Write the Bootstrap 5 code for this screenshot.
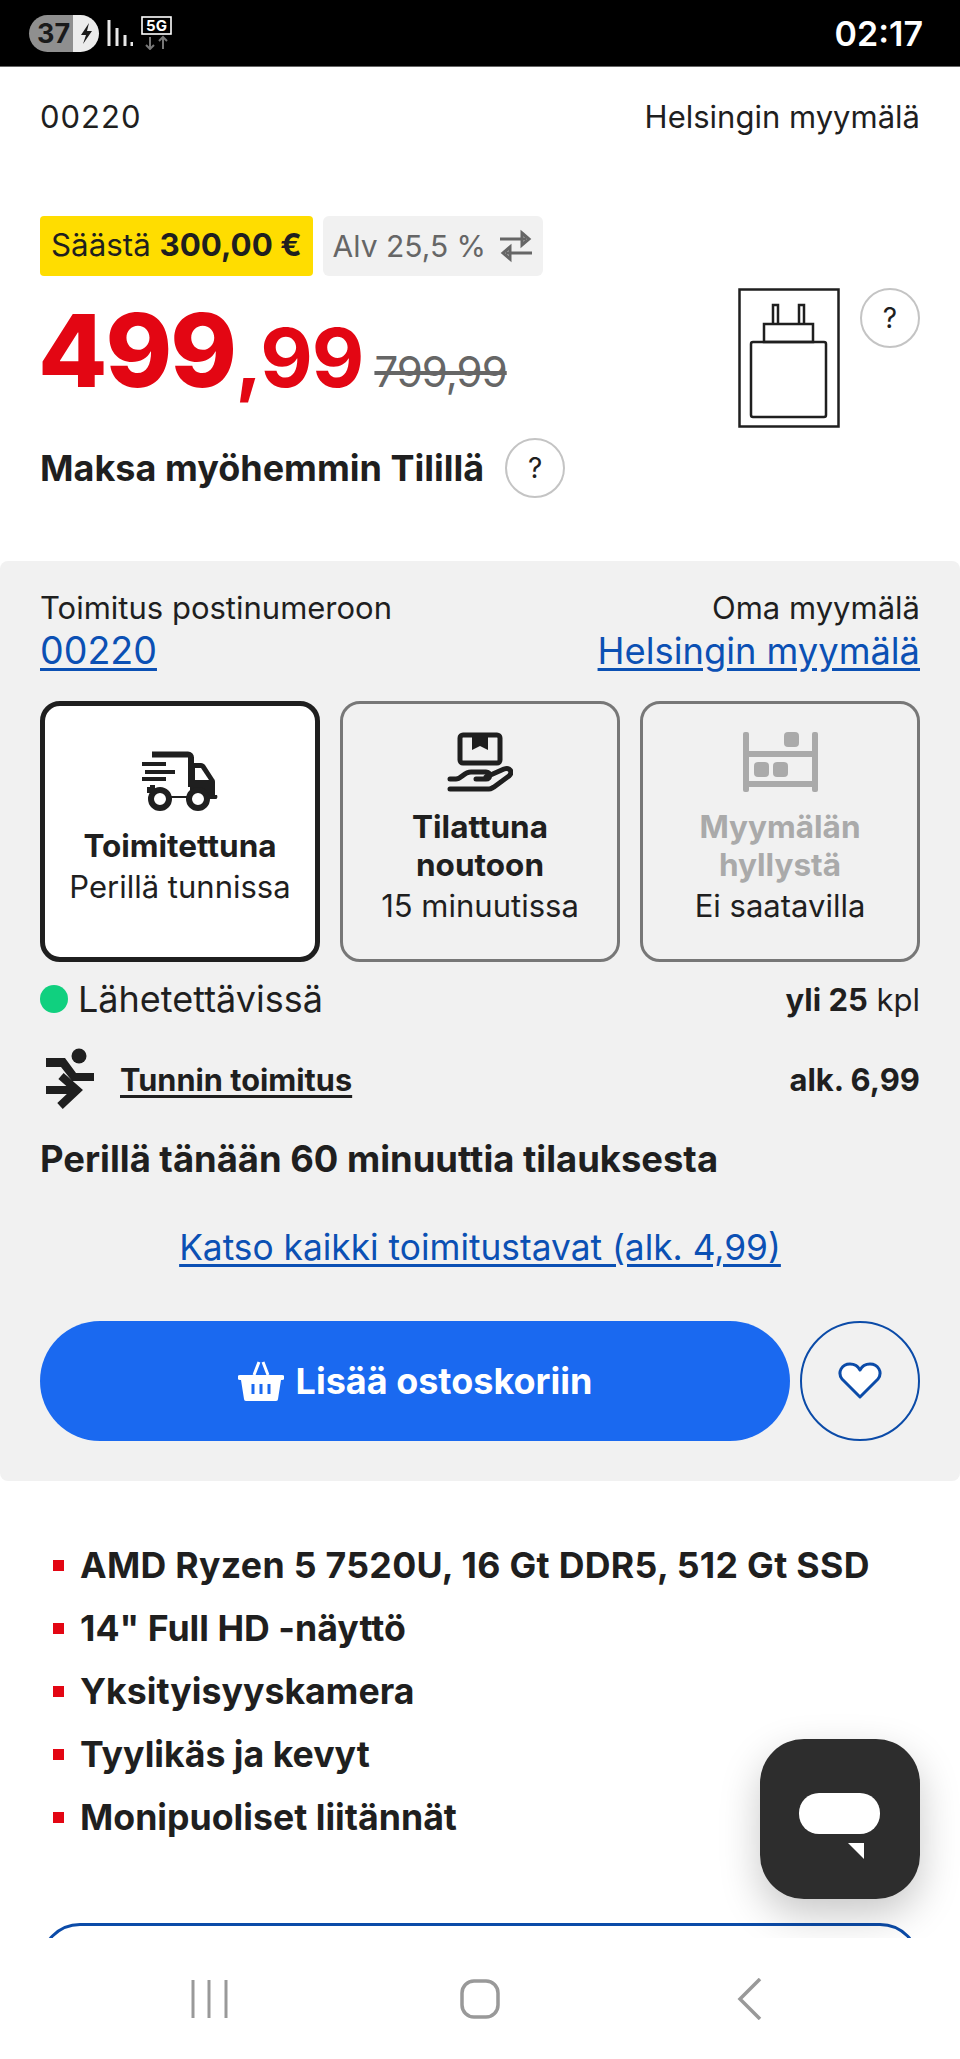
<!DOCTYPE html>
<html lang="fi">

<head>
    <meta charset="UTF-8">
    <meta name="viewport" content="width=device-width, initial-scale=1.0">
    <title>Tuote</title>
    <link href="https://cdn.jsdelivr.net/npm/bootstrap@5.3.0/dist/css/bootstrap.min.css" rel="stylesheet">
    <style>
        html, body { height: 2059px; }

        body {
            font-family: "Inter", "Liberation Sans", sans-serif;
            color: #1f1f1f;
            background: #fff;
            overflow: hidden;
            font-size: 31px;
            line-height: 39px;
        }

        .phone { height: 2059px; }

        .status-bar {
            height: 67px;
            background: #000;
            border-bottom: 1px solid #666;
            padding: 0 37px 0 29px;
            flex: none;
        }

        .clock { color: #fff; font-size: 34px; font-weight: 600; }

        .batt {
            width: 70px; height: 37px;
            border-radius: 19px;
            overflow: hidden;
            background: linear-gradient(90deg, #8f8f8f 44px, #ececec 44px);
            color: #1a1a1a;
            font-size: 27px;
            font-weight: 700;
            line-height: 37px;
            padding-left: 8px;
        }

        .batt-bolt { left: 46px; }

        .page { flex: 1 1 auto; overflow: hidden; }

        .top-row { padding: 0 40px; height: 99px; }
        .top-row div { line-height: 99px; }
        .top-zip { letter-spacing: 1px; }

        .offer { padding: 50px 40px 0; height: 395px; }

        .tag-row { gap: 10px; }

        .save-tag {
            height: 60px; padding: 0 11px;
            background: #ffdd00;
            border-radius: 4px;
            font-size: 31.3px; line-height: 58px;
            white-space: nowrap;
        }

        .vat-tag {
            height: 60px; padding: 0 10px 0 10px;
            background: #f1f1f1;
            border-radius: 6px;
            color: #666;
            font-size: 30px; line-height: 58px;
            white-space: nowrap;
        }

        .vat-tag svg { margin-left: 13px; }

        .price-main {
            color: #e30613;
            font-weight: 800;
            font-size: 101px;
            line-height: 120px;
            letter-spacing: -2px;
            margin: 14px 0 0 -2px;
            white-space: nowrap;
        }

        .price-cents { font-size: 81px; font-weight: 700; letter-spacing: -1px; }

        .price-old {
            color: #666;
            font-size: 42px;
            font-weight: 400;
            text-decoration: line-through;
            margin-left: 11px;
            letter-spacing: -1px;
        }

        .help-dot {
            width: 60px; height: 60px;
            flex: none;
            border: 2px solid #c4c4c4;
            border-radius: 50%;
            background: #fff;
            font-size: 28px;
            font-weight: 400;
            color: #1f1f1f;
        }

        .tili { font-size: 36px; font-weight: 700; margin-top: 6px; white-space: nowrap; }
        .tili .help-dot { margin-left: 21px; }

        .charger { gap: 20px; margin-top: 72px; }

        .delivery {
            background: #f1f1f1;
            border-radius: 8px;
            padding: 27px 40px 0;
            height: 920px;
        }

        .blue-link { color: #0b50b4; text-decoration: underline; text-underline-offset: 4px; }
        .loc-link { font-size: 36.3px; line-height: 48px; }
        .loc-zip { font-size: 37.6px; }

        .method-row { margin-top: 26px; gap: 20px; }

        .method {
            flex: 0 0 280px;
            height: 261px;
            padding-bottom: 6px;
            border: 3px solid #777;
            border-radius: 20px;
            line-height: 39px;
        }

        .method.picked { background: #fff; border: 5px solid #1f1f1f; }
        .method svg { margin-bottom: 16px; }
        .method b { font-weight: 700; font-size: 31.5px; line-height: 38px; }
        .method span { margin-top: 2px; }
        .method .off { color: #aaa; }

        .stock-row { margin-top: 17px; height: 40px; }
        .green-dot { width: 28px; height: 28px; border-radius: 50%; background: #10d07f; margin-right: 10px; }
        .stock-text { font-size: 36px; }

        .ship-row { margin-top: 29px; height: 62px; }
        .runner { margin-left: 6px; }
        .ship-link { color: #1f1f1f; font-weight: 700; text-decoration: underline; margin-left: 24px; font-size: 30.7px; text-underline-offset: 4px; }
        .today { font-size: 36.4px; font-weight: 700; margin-top: 27px; line-height: 44px; }
        .all-ways { font-size: 35.3px; margin-top: 44px; line-height: 46px; }

        .buy-row { margin-top: 50px; gap: 10px; }

        .buy-btn {
            height: 120px;
            flex: 1 1 auto;
            border: 0;
            border-radius: 60px;
            background: #1a69f0;
            color: #fff;
            font-weight: 700;
            font-size: 36px;
        }

        .buy-btn svg { margin-right: 12px; }

        .wish-btn {
            width: 120px; height: 120px;
            flex: none;
            background: transparent;
            border: 2px solid #0b4ba8;
            border-radius: 50%;
        }

        .points { list-style: none; margin: 0; padding: 53px 40px 0; }

        .points li {
            font-size: 35.7px;
            font-weight: 700;
            line-height: 63px;
            height: 63px;
            white-space: nowrap;
        }

        .points li.wide-line { letter-spacing: .3px; }

        .sq { width: 11px; height: 11px; background: #e30613; margin: 0 16px 0 13px; flex: none; }

        .outline-cta {
            height: 120px;
            margin: 74px 40px 0;
            border: 3px solid #0b4ba8;
            border-radius: 40px;
        }

        .chat-fab {
            position: absolute;
            right: 40px; top: 1739px;
            width: 160px; height: 160px;
            padding-top: 20px;
            border-radius: 44px;
            background: #2d2d2d;
            box-shadow: 0 16px 40px rgba(0, 0, 0, .22);
        }

        .nav-keys { height: 121px; flex: none; background: #fff; position: relative; z-index: 2; padding-left: 190px; }
        .nav-home { margin-left: 230px; }
        .nav-back { margin-left: 237px; }
    </style>
</head>

<body>
    <div class="phone d-flex flex-column position-relative">
        <!-- Status bar -->
        <div class="status-bar d-flex align-items-center justify-content-between">
            <div class="d-flex align-items-center">
                <div class="batt position-relative">37
                    <svg class="batt-bolt position-absolute top-0" width="22" height="37" viewBox="0 0 22 37"><path d="M14 8 6 20h5l-3 9 9-13h-5z" fill="#1a1a1a"/></svg>
                </div>
                <svg class="ms-2" width="26" height="28" viewBox="0 0 26 28"><path d="M2 1v26M10 9v18M18 16v11M25 23v4" stroke="#e8e8e8" stroke-width="3" fill="none"/></svg>
                <svg class="ms-2" width="32" height="34" viewBox="0 0 32 34">
                    <rect x="1" y="1" width="29" height="17" fill="none" stroke="#fff" stroke-width="1.6"/>
                    <text x="15.5" y="15" text-anchor="middle" font-size="15" font-weight="700" fill="#fff" font-family="Inter">5G</text>
                    <path d="M9 21v12M5 29l4 4 4-4M22 33V21M18 25l4-4 4 4" stroke="#777" stroke-width="2" fill="none"/>
                </svg>
            </div>
            <div class="clock">02:17</div>
        </div>

        <!-- Page content -->
        <div class="page">
            <div class="top-row d-flex justify-content-between">
                <div class="top-zip">00220</div>
                <div>Helsingin myymälä</div>
            </div>

            <div class="offer d-flex justify-content-between">
                <div>
                    <div class="tag-row d-flex">
                        <div class="save-tag">Säästä <b>300,00 €</b></div>
                        <div class="vat-tag d-flex align-items-center">Alv 25,5 %
                            <svg width="34" height="34" viewBox="0 0 34 34"><path d="M1 10h26M23 4l7 6-7 6zM33 24H7M11 18l-7 6 7 6z" fill="none" stroke="#666" stroke-width="3"/></svg>
                        </div>
                    </div>
                    <div class="price-main">499<span class="price-cents">,99</span><span class="price-old">799,99</span></div>
                    <div class="tili d-flex align-items-center">Maksa myöhemmin Tilillä
                        <div class="help-dot d-flex align-items-center justify-content-center">?</div>
                    </div>
                </div>
                <div class="charger d-flex align-items-start">
                    <svg width="102" height="140" viewBox="0 0 102 140">
                        <rect x="1.5" y="1.5" width="99" height="137" fill="none" stroke="#1f1f1f" stroke-width="2.5"/>
                        <path d="M35 17h5v19h-5zM61 17h5v19h-5zM26 36h49v18H26z" fill="none" stroke="#1f1f1f" stroke-width="2.5"/>
                        <rect x="13" y="54" width="75" height="75" rx="2" fill="none" stroke="#1f1f1f" stroke-width="2.5"/>
                    </svg>
                    <div class="help-dot d-flex align-items-center justify-content-center">?</div>
                </div>
            </div>

            <!-- Delivery box -->
            <div class="delivery">
                <div class="d-flex justify-content-between">
                    <div>
                        <div>Toimitus postinumeroon</div>
                        <a href="#" class="blue-link loc-link loc-zip">00220</a>
                    </div>
                    <div class="text-end">
                        <div>Oma myymälä</div>
                        <a href="#" class="blue-link loc-link">Helsingin myymälä</a>
                    </div>
                </div>

                <div class="method-row d-flex">
                    <div class="method picked d-flex flex-column align-items-center justify-content-center text-center">
                        <svg width="76" height="60" viewBox="0 0 76 60">
                            <path d="M10 3.5h36a3 3 0 0 1 3 3V36M8 36v6" fill="none" stroke="#1f1f1f" stroke-width="6"/>
                            <path d="M0 13h24M3 21h30M0 28h24" stroke="#1f1f1f" stroke-width="4"/>
                            <path d="M48 12h11c2 0 3 1 4 2l9 14c1 1 1 2 1 4v12h2c1 2 0 4-1 4H63a10 10 0 0 0-18-1H27a10 10 0 0 0-19-3V34h5v11h35z" fill="#1f1f1f"/>
                            <path d="M53 17h6l8 12H53z" fill="#fff"/>
                            <circle cx="18" cy="48" r="9" fill="#fff" stroke="#1f1f1f" stroke-width="6"/>
                            <circle cx="56" cy="48" r="9" fill="#fff" stroke="#1f1f1f" stroke-width="6"/>
                        </svg>
                        <b>Toimitettuna</b>
                        <span>Perillä tunnissa</span>
                    </div>
                    <div class="method d-flex flex-column align-items-center justify-content-center text-center">
                        <svg width="66" height="60" viewBox="0 0 66 60">
                            <path d="M16 3h34a3 3 0 0 1 3 3v22a3 3 0 0 1-3 3H16a3 3 0 0 1-3-3V6a3 3 0 0 1 3-3z" fill="none" stroke="#1f1f1f" stroke-width="5"/>
                            <path d="M25 3h16v15l-8-4-8 4z" fill="#1f1f1f"/>
                            <path d="M3 47h6c5 0 8-7 15-7h15c5 0 5 7 0 7H29M39 45l18-8c6-2 9 3 5 7L47 55c-2 1-3 2-5 2H3" fill="none" stroke="#1f1f1f" stroke-width="5" stroke-linecap="round" stroke-linejoin="round"/>
                        </svg>
                        <b>Tilattuna<br>noutoon</b>
                        <span>15 minuutissa</span>
                    </div>
                    <div class="method d-flex flex-column align-items-center justify-content-center text-center">
                        <svg width="75" height="60" viewBox="0 0 75 60" fill="#aaa">
                            <rect x="0" y="0" width="6" height="60" rx="2"/>
                            <rect x="69" y="0" width="6" height="60" rx="2"/>
                            <rect x="3" y="19" width="69" height="6"/>
                            <rect x="3" y="49" width="69" height="6"/>
                            <rect x="41" y="0" width="15" height="15" rx="4"/>
                            <rect x="11" y="30" width="15" height="15" rx="4"/>
                            <rect x="30" y="30" width="15" height="15" rx="4"/>
                        </svg>
                        <b class="off">Myymälän<br>hyllystä</b>
                        <span>Ei saatavilla</span>
                    </div>
                </div>

                <div class="stock-row d-flex align-items-center justify-content-between">
                    <div class="d-flex align-items-center stock-text"><span class="green-dot"></span>Lähetettävissä</div>
                    <div><b>yli 25</b> kpl</div>
                </div>

                <div class="ship-row d-flex align-items-center justify-content-between">
                    <div class="d-flex align-items-center">
                        <svg class="runner" width="50" height="62" viewBox="0 0 50 62" fill="#1f1f1f">
                            <circle cx="33" cy="8" r="7.5"/>
                            <path d="M0 10h19l11 15h18v8H26L15 19H0z"/>
                            <path d="M15 28l16 14-17 16M0 42h28" fill="none" stroke="#1f1f1f" stroke-width="8"/>
                        </svg>
                        <a href="#" class="ship-link">Tunnin toimitus</a>
                    </div>
                    <b>alk. 6,99</b>
                </div>

                <div class="today">Perillä tänään 60 minuuttia tilauksesta</div>
                <div class="all-ways text-center"><a href="#" class="blue-link">Katso kaikki toimitustavat (alk. 4,99)</a></div>

                <div class="buy-row d-flex">
                    <button class="buy-btn d-flex align-items-center justify-content-center" type="button">
                        <svg width="46" height="40" viewBox="0 0 46 40">
                            <path d="M16 14 21 1M30 14 25 1" stroke="#fff" stroke-width="3" fill="none"/>
                            <path d="M2 14h42a2 2 0 0 1 0 5h-1l-3 19a2 2 0 0 1-2 2H8a2 2 0 0 1-2-2L3 19H2a2 2 0 0 1 0-5z" fill="#fff"/>
                            <path d="M15 23v10M23 23v10M31 23v10" stroke="#1a69f0" stroke-width="3"/>
                        </svg>
                        Lisää ostoskoriin
                    </button>
                    <button class="wish-btn d-flex align-items-center justify-content-center" type="button" aria-label="Suosikki">
                        <svg width="44" height="38" viewBox="0 0 44 38"><path d="M22 35 4 17C-1 10 4 2 12 2c4 0 8 2 10 6 2-4 6-6 10-6 8 0 13 8 8 15z" fill="#fff" stroke="#0b4ba8" stroke-width="3" stroke-linejoin="round"/></svg>
                    </button>
                </div>
            </div>

            <!-- Product points -->
            <ul class="points">
                <li class="wide-line d-flex align-items-center"><span class="sq"></span>AMD Ryzen 5 7520U, 16 Gt DDR5, 512 Gt SSD</li>
                <li class="d-flex align-items-center"><span class="sq"></span>14" Full HD -näyttö</li>
                <li class="d-flex align-items-center"><span class="sq"></span>Yksityisyyskamera</li>
                <li class="d-flex align-items-center"><span class="sq"></span>Tyylikäs ja kevyt</li>
                <li class="d-flex align-items-center"><span class="sq"></span>Monipuoliset liitännät</li>
            </ul>
            <div class="outline-cta"></div>
        </div>

        <!-- Chat button -->
        <div class="chat-fab d-flex align-items-center justify-content-center">
            <svg width="82" height="72" viewBox="0 0 82 72">
                <rect x="0" y="0" width="81" height="41" rx="20" fill="#fff"/>
                <path d="M49 50h16v16z" fill="#fff"/>
            </svg>
        </div>

        <!-- Android keys -->
        <div class="nav-keys d-flex align-items-center">
            <svg width="40" height="40" viewBox="0 0 40 40"><path d="M3 1v38M19 1v38M36 1v38" stroke="#999" stroke-width="3"/></svg>
            <svg class="nav-home" width="40" height="40" viewBox="0 0 40 40"><rect x="2" y="2" width="36" height="36" rx="12" fill="none" stroke="#999" stroke-width="3.5"/></svg>
            <svg class="nav-back" width="26" height="42" viewBox="0 0 26 42"><path d="M23 1 3 21l20 20" fill="none" stroke="#999" stroke-width="3.5"/></svg>
        </div>
    </div>
</body>

</html>
